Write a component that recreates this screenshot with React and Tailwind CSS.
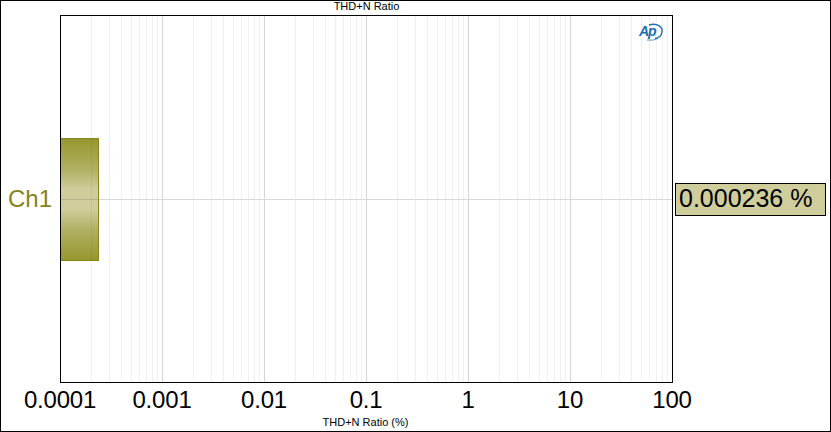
// THD+N bar graph
const DECADE = 102;
const ticks = ["0.0001", "0.001", "0.01", "0.1", "1", "10", "100"];

const lineas = [];
for (let d = 0; d < 6; d++) {
  for (let n = 1; n < 10; n++) {
    const x = Math.round(d * DECADE + DECADE * Math.log10(n)) - 1;
    lineas.push({ x, mayor: n === 1 });
  }
}

const Grafico = () => (
  <svg width="611" height="366" className="block">
    <defs>
      <linearGradient id="barra" x1="0" y1="0" x2="0" y2="1">
        <stop offset="0" stopColor="#96962f" />
        <stop offset="0.25" stopColor="#b0b062" />
        <stop offset="0.42" stopColor="#cfcd9c" />
        <stop offset="0.58" stopColor="#cfcd9c" />
        <stop offset="0.75" stopColor="#b0b062" />
        <stop offset="1" stopColor="#96962f" />
      </linearGradient>
    </defs>
    {lineas.map(({ x, mayor }) =>
      x < 0 ? null : (
        <line
          key={x}
          x1={x + 0.5}
          x2={x + 0.5}
          y1="0"
          y2="366"
          stroke={mayor ? "#d4d4d4" : "#f0f0f0"}
        />
      )
    )}
    <line x1="0" x2="611" y1="183.5" y2="183.5" stroke="#d8d8d8" />
    <rect x="-1" y="122.5" width="38.5" height="122" fill="url(#barra)" stroke="#85851a" />
    <line x1="0" x2="37" y1="183.5" y2="183.5" stroke="#000" strokeOpacity="0.12" />
    <line x1="30.5" x2="30.5" y1="123" y2="244" stroke="#000" strokeOpacity="0.05" />
    {/* logo */}
    <g fill="none" stroke="#1a6fb0">
      <path d="M588 9 C596 6.5 602 11 601 16 C600.5 20 597 22 594 22.5" strokeWidth="1.4" />
      <path d="M586 24 Q592 25 597 22.5" strokeWidth="0.7" />
    </g>
    <text
      x="578"
      y="20"
      fill="#1a6fb0"
      fontSize="14"
      fontWeight="700"
      fontStyle="italic"
      fontFamily="'Liberation Sans', sans-serif"
      letterSpacing="-1"
    >
      Ap
    </text>
  </svg>
);

const App = () => {
  return (
    <div className="w-[831px] h-[432px] bg-white border border-black flex flex-col overflow-hidden font-['Liberation_Sans',Arial,sans-serif] text-black">
      <div className="h-[14px] w-[613px] ml-[59px] shrink-0 text-center text-[11px] leading-[11px]">
        THD+N Ratio
      </div>

      <div className="flex h-[368px] shrink-0">
        <div className="w-[59px] flex items-center pl-[7px] pb-[1px] text-[24px] leading-none text-[#85851a]">
          Ch1
        </div>
        <div className="w-[613px] border border-black">
          <Grafico />
        </div>
        <div className="flex items-center ml-[2px] pt-[1px]">
          <div className="w-[151px] h-[33px] bg-[#cfcd9b] border border-black pl-[3px] text-[25px] leading-[28px]">
            0.000236 %
          </div>
        </div>
      </div>

      <div className="flex justify-between w-[612px] ml-[59px] mt-[3px] text-[24px] leading-[28px] tracking-[-0.2px]">
        {ticks.map((t) => (
          <div key={t} className="w-0 flex justify-center whitespace-nowrap">
            {t}
          </div>
        ))}
      </div>

      <div className="w-[611px] ml-[59px] mt-[2px] text-center text-[11px] leading-[12px]">
        THD+N Ratio (%)
      </div>
    </div>
  );
};

export default App;
